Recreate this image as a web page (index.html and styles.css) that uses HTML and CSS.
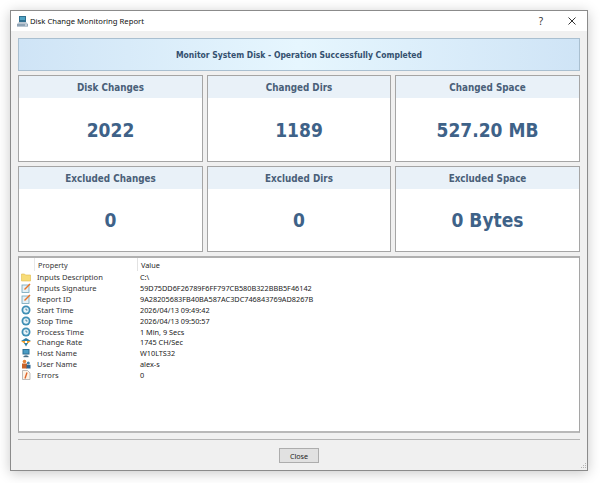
FILE: index.html
```html
<!DOCTYPE html>
<html lang="en">

<head>
    <meta charset="UTF-8">
    <title>Disk Change Monitoring Report</title>
    <link rel="stylesheet" href="styles.css">
</head>

<body>
    <div class="Window">
        <div class="titleBar">
            <svg class="appIcon" width="11" height="11" viewBox="0 0 11 11">
                <rect x="2" y="0" width="7" height="6" fill="#2f6f8f"/>
                <rect x="3" y="1" width="5" height="3" fill="#4fa3c4"/>
                <path d="M2 6h7l2 2v3H0V8z" fill="#b9c6d2"/>
                <rect x="0" y="8" width="11" height="2" fill="#8fa3b5"/>
                <rect x="8" y="8.500" width="2" height="1" fill="#eef3f7"/>
            </svg>
            <span class="titleText">Disk Change Monitoring Report</span>
            <span class="help">?</span>
            <svg class="closeX" width="8" height="8" viewBox="0 0 8 8">
                <path d="M.5.5l7 7M7.500.5l-7 7" stroke="#333" stroke-width="1" fill="none"/>
            </svg>
        </div>
        <div class="Content">
            <div class="banner">Monitor System Disk - Operation Successfully Completed</div>
            <div class="cards">
                <div class="card">
                    <div class="cardHead">Disk Changes</div>
                    <div class="cardValue">2022</div>
                </div>
                <div class="card">
                    <div class="cardHead">Changed Dirs</div>
                    <div class="cardValue">1189</div>
                </div>
                <div class="card">
                    <div class="cardHead">Changed Space</div>
                    <div class="cardValue">527.20 MB</div>
                </div>
                <div class="card">
                    <div class="cardHead">Excluded Changes</div>
                    <div class="cardValue">0</div>
                </div>
                <div class="card">
                    <div class="cardHead">Excluded Dirs</div>
                    <div class="cardValue">0</div>
                </div>
                <div class="card">
                    <div class="cardHead">Excluded Space</div>
                    <div class="cardValue">0 Bytes</div>
                </div>
            </div>
            <div class="list">
                <div class="row listHead">
                    <span class="ico"></span>
                    <span class="prop headCell">Property</span>
                    <span class="val headVal">Value</span>
                </div>
                <div class="row">
                    <svg class="ico" viewBox="0 0 10 10"><path d="M.5 2h3l1 1h5v6H.5z" fill="#f7dc78" stroke="#e0bb4c" stroke-width=".6"/></svg>
                    <span class="prop">Inputs Description</span><span class="val">C:\</span>
                </div>
                <div class="row">
                    <svg class="ico" viewBox="0 0 10 10"><rect x="1" y="2" width="7" height="7.500" fill="#e4f0f6" stroke="#6fa3ba" stroke-width=".8"/><path d="M3.500 6.500L9 1" stroke="#e8742a" stroke-width="1.500"/></svg>
                    <span class="prop">Inputs Signature</span><span class="val">59D75DD6F26789F6FF797CB580B322BBB5F46142</span>
                </div>
                <div class="row">
                    <svg class="ico" viewBox="0 0 10 10"><rect x="1" y="2" width="7" height="7.500" fill="#e4f0f6" stroke="#6fa3ba" stroke-width=".8"/><path d="M3.500 6.500L9 1" stroke="#e8742a" stroke-width="1.500"/></svg>
                    <span class="prop">Report ID</span><span class="val">9A28205683FB40BA587AC3DC746843769AD8267B</span>
                </div>
                <div class="row">
                    <svg class="ico" viewBox="0 0 10 10"><circle cx="5" cy="5" r="4.500" fill="#3f8fb5"/><circle cx="5" cy="5" r="2.700" fill="#e6f3f9"/><path d="M5 3.500V5h1.500" stroke="#2d6f90" stroke-width=".8" fill="none"/></svg>
                    <span class="prop">Start Time</span><span class="val">2026/04/13 09:49:42</span>
                </div>
                <div class="row">
                    <svg class="ico" viewBox="0 0 10 10"><circle cx="5" cy="5" r="4.500" fill="#3f8fb5"/><circle cx="5" cy="5" r="2.700" fill="#e6f3f9"/><path d="M5 3.500V5h1.500" stroke="#2d6f90" stroke-width=".8" fill="none"/></svg>
                    <span class="prop">Stop Time</span><span class="val">2026/04/13 09:50:57</span>
                </div>
                <div class="row">
                    <svg class="ico" viewBox="0 0 10 10"><circle cx="5" cy="5" r="4.500" fill="#3f8fb5"/><circle cx="5" cy="5" r="2.700" fill="#e6f3f9"/><path d="M5 3.500V5h1.500" stroke="#2d6f90" stroke-width=".8" fill="none"/></svg>
                    <span class="prop">Process Time</span><span class="val">1 Min, 9 Secs</span>
                </div>
                <div class="row">
                    <svg class="ico" viewBox="0 0 10 10"><path d="M0 4h10L5 1z" fill="#2f7fa5"/><path d="M0 4h4v3zM10 4H6v3z" fill="#f0a030"/><path d="M3 6h4L5 9.500z" fill="#2f7fa5"/></svg>
                    <span class="prop">Change Rate</span><span class="val">1745 CH/Sec</span>
                </div>
                <div class="row">
                    <svg class="ico" viewBox="0 0 10 10"><rect x="1.500" y="1" width="7" height="5.500" fill="#2c6f94"/><rect x="2.500" y="2" width="5" height="3.500" fill="#4a9cc4"/><rect x="3.500" y="6.500" width="3" height="1.500" fill="#8aa4b5"/><rect x="2.500" y="8" width="5" height="1.200" fill="#4a6f85"/></svg>
                    <span class="prop">Host Name</span><span class="val">W10LTS32</span>
                </div>
                <div class="row">
                    <svg class="ico" viewBox="0 0 10 10"><circle cx="3.500" cy="2.500" r="1.800" fill="#e8843a"/><rect x="1" y="4.500" width="5" height="5" fill="#c9622a"/><circle cx="7.300" cy="4" r="1.500" fill="#3f7fa8"/><rect x="5.500" y="5.800" width="4" height="3.700" fill="#2f6490"/></svg>
                    <span class="prop">User Name</span><span class="val">alex-s</span>
                </div>
                <div class="row">
                    <svg class="ico" viewBox="0 0 10 10"><path d="M1.500.5h5l2.500 2.500v6.500H1.500z" fill="#fbf3e6" stroke="#a0a0a0" stroke-width=".7"/><path d="M6 2.500L4 8.500" stroke="#e0662a" stroke-width="1.400"/></svg>
                    <span class="prop">Errors</span><span class="val">0</span>
                </div>
            </div>
            <div class="footer">
                <div class="closeBtn">Close</div>
            </div>
        </div>
        <svg class="grip" width="7" height="7" viewBox="0 0 7 7">
            <path d="M5 0h1v1H5zM3 2h1v1H3zM5 2h1v1H5zM1 4h1v1H1zM3 4h1v1H3zM5 4h1v1H5z" fill="#b4b4b4"/>
        </svg>
    </div>
</body>

</html>
```

FILE: styles.css
```css
*{
    margin: 0px;
    padding: 0px;
    box-sizing: border-box;
}

body {
    background-color: white;
    padding: 10px 12px 11px 10px;
    height: 483px;
    overflow: hidden;
    font-family: "Noto Sans", sans-serif;
    font-size: 8px;
    color: #222;
}

.Window {
    position: relative;
    width: 578px;
    height: 461px;
    border: 1px solid #8b8b8b;
    background-color: #f0f0f0;
    box-shadow: 0px 2px 12px 0px rgba(0, 0, 0, 0.22);
    display: flex;
    flex-direction: column;
}

.grip {
    position: absolute;
    right: 0px;
    bottom: 0px;
}

.titleBar {
    height: 20px;
    background-color: white;
    display: flex;
    align-items: center;
    padding-left: 6px;
    flex-shrink: 0;
}

.appIcon {
    margin-right: 2px;
}

.titleText {
    flex: 1;
    font-size: 7.7px;
    color: #111;
}

.help {
    font-size: 10px;
    color: #333;
    margin-right: 25px;
}

.closeX {
    margin-right: 11px;
}

.Content {
    flex: 1;
    padding: 7px 7px 0 7px;
    display: flex;
    flex-direction: column;
    gap: 4px;
}

.banner,
.cardHead,
.cardValue {
    font-family: "DejaVu Sans", sans-serif;
    font-stretch: condensed;
    font-weight: bold;
    display: flex;
    align-items: center;
    justify-content: center;
}

.banner {
    height: 33px;
    border: 1px solid #a9bfd0;
    background: linear-gradient(to right, #cfe4f6, #e6f6fe 50%, #cfe4f6);
    font-size: 8.5px;
    color: #34506f;
}

.cards {
    display: grid;
    grid-template-columns: 185px 184px 185px;
    grid-template-rows: 87px 86px;
    column-gap: 4px;
    row-gap: 4px;
}

.card {
    border: 1px solid #a5a5a5;
    background-color: white;
    display: flex;
    flex-direction: column;
}

.cardHead {
    height: 22px;
    background-color: #e9f1f8;
    font-size: 9.8px;
    color: #4a5f78;
}

.cardValue {
    flex: 1;
    font-size: 19px;
    color: #3e6288;
}

.list {
    height: 177px;
    border: 1px solid #a5a5a5;
    border-top: 2px solid #b0b0b0;
    border-bottom: 2px solid #b8b8b8;
    background-color: white;
}

.row {
    height: 10.85px;
    display: flex;
    align-items: center;
    white-space: nowrap;
}

.listHead {
    height: 13px;
    margin-bottom: 1px;
}

.ico {
    width: 10px;
    height: 10px;
    margin-left: 2px;
    margin-right: 6px;
    flex-shrink: 0;
}

.prop {
    width: 103px;
    font-size: 7.6px;
    color: #333;
}

.headCell {
    width: 104px;
    font-size: 7.3px;
    margin-left: -3px;
    padding-left: 3px;
    height: 100%;
    display: flex;
    align-items: center;
    border-left: 1px solid #e8e8e8;
    border-right: 1px solid #e2e2e2;
}

.val {
    font-size: 7.3px;
    color: #222;
}

.headVal {
    margin-left: 3px;
}

.footer {
    margin-top: 2px;
    border-top: 1px solid #b5b5b5;
    padding-top: 8px;
    display: flex;
    justify-content: center;
}

.closeBtn {
    width: 40px;
    height: 15px;
    border: 1px solid #adadad;
    background-color: #e1e1e1;
    display: flex;
    align-items: center;
    justify-content: center;
    font-size: 7.2px;
    color: #222;
}
```
